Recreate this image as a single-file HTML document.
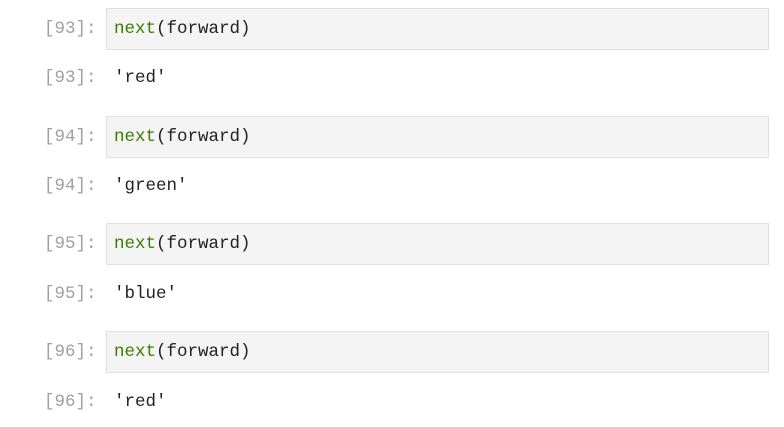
<!DOCTYPE html>
<html><head><style>
body{margin:0;background:#fff;width:784px;height:427px;overflow:hidden;font-family:"Liberation Mono","DejaVu Sans Mono",monospace;font-size:17.5px;}
.p{position:absolute;left:44px;color:#a0a0a0;}
.in{position:absolute;left:106px;width:661px;height:40px;background:#f4f4f4;border:1px solid #e0e0e0;}
.t{position:absolute;left:114px;color:#222;}
.g{color:#3a7d00;}
</style></head><body>
<div class="in" style="top:8px"></div><div class="p" style="top:19px">[93]:</div><div class="t" style="top:19px"><span class="g">next</span>(forward)</div>
<div class="p" style="top:68px">[93]:</div><div class="t" style="top:68px">'red'</div>
<div class="in" style="top:116px"></div><div class="p" style="top:127px">[94]:</div><div class="t" style="top:127px"><span class="g">next</span>(forward)</div>
<div class="p" style="top:176px">[94]:</div><div class="t" style="top:176px">'green'</div>
<div class="in" style="top:223px"></div><div class="p" style="top:234px">[95]:</div><div class="t" style="top:234px"><span class="g">next</span>(forward)</div>
<div class="p" style="top:284px">[95]:</div><div class="t" style="top:284px">'blue'</div>
<div class="in" style="top:331px"></div><div class="p" style="top:342px">[96]:</div><div class="t" style="top:342px"><span class="g">next</span>(forward)</div>
<div class="p" style="top:392px">[96]:</div><div class="t" style="top:392px">'red'</div>
</body></html>
